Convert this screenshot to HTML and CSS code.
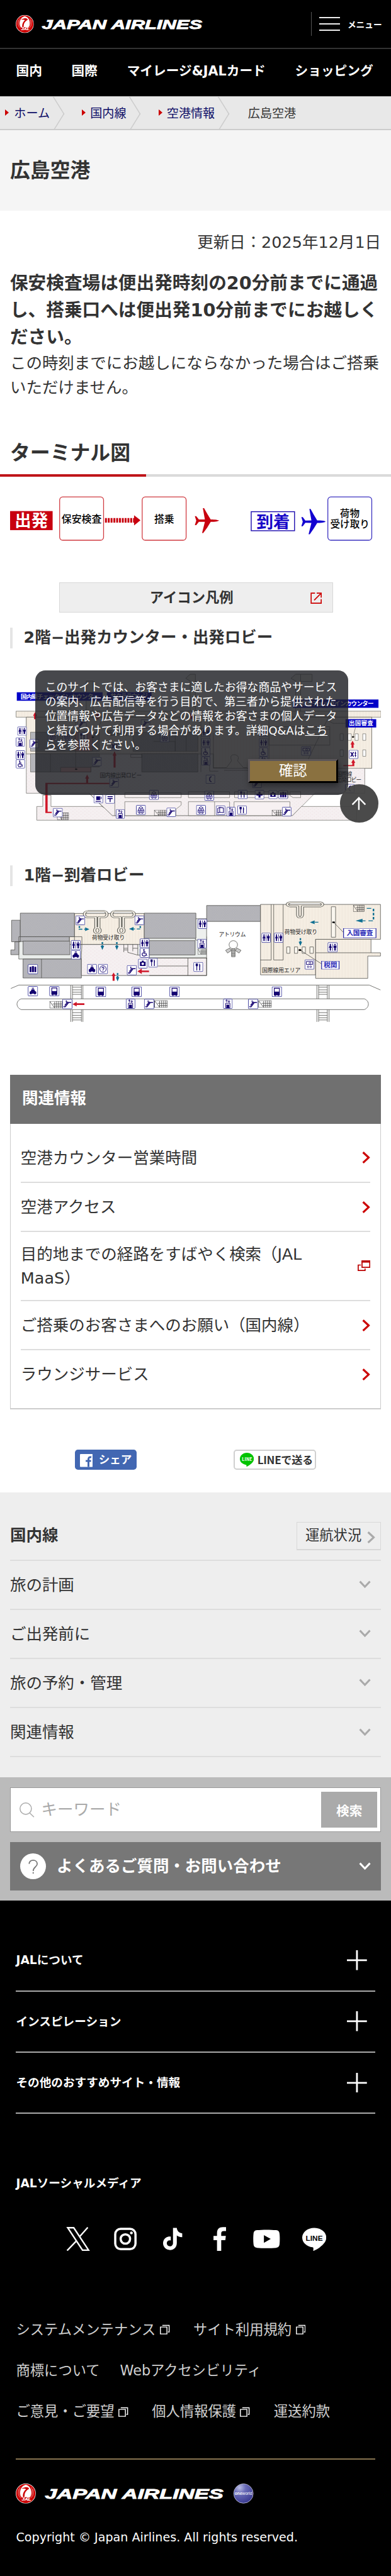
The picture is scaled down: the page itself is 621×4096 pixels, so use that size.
FILE: index.html
```html
<!DOCTYPE html>
<html lang="ja">
<head>
    <meta charset="UTF-8">
    <meta name="viewport" content="width=device-width, initial-scale=1.0">
    <title>広島空港</title>
    <link rel="stylesheet" href="styles.css">
</head>
<body>
    <!-- shared icons -->
    <svg class="defs" width="0" height="0">
        <defs>
            <symbol id="crane" viewBox="0 0 60 60">
                <circle cx="30" cy="30" r="30" fill="#fff"/>
                <circle cx="30" cy="30" r="28.6" fill="#c00"/>
                <path d="M18 41C10 34 11 8 30 4C49 8 50 34 42 41C39 43 33 43 31 40C25 43 21 43 18 41Z" fill="#fff"/>
                <path d="M17 14C24 14 26 11 31 11C36 10 39 13 40 16C36 18 33 20 29 26C26 31 27 34 26 40L22 42C20 30 24 23 31 17C27 15 22 17 17 14Z" fill="#c00"/>
                <path d="M9 17C5 30 8 38 16 44M13 11C8 27 12 37 18 42M51 17C55 30 52 38 44 44M47 11C52 27 48 37 42 42" stroke="#fff" stroke-width=".9" fill="none"/>
                <text x="18" y="51.5" textLength="28" lengthAdjust="spacingAndGlyphs" class="logo-text" font-size="11">JAL</text>
            </symbol>
            <symbol id="arrow" viewBox="0 0 8 12"><path d="M1 .8L6.6 6L1 11.2" fill="none" stroke="currentColor" stroke-width="2"/></symbol>
            <symbol id="down" viewBox="0 0 12 8"><path d="M1 1L6 6.3L11 1" fill="none" stroke="currentColor" stroke-width="1.9"/></symbol>
            <symbol id="plus" viewBox="0 0 20 20"><path d="M10 0V20M0 10H20" stroke="currentColor" stroke-width="1.8"/></symbol>
            <symbol id="copy" viewBox="0 0 10 10"><path d="M.5 2.6H7V9.5H.5ZM2.4 .9H9.2V7.5H8" fill="none" stroke="#fff" stroke-width=".9"/></symbol>

            <pattern id="hatch" width="9" height="12" patternUnits="userSpaceOnUse"><path d="M0 0H9V12H0Z" fill="#b7b7bb"/><path d="M0 12L9 0" stroke="#a2a2ab" stroke-width="1.5"/></pattern>
            <pattern id="cream" width="12" height="20" patternUnits="userSpaceOnUse"><path d="M0 0H12V20H0Z" fill="#f5eee3"/><path d="M3 0V20" stroke="#ece3d6" stroke-width="2"/></pattern>
            <pattern id="dots" width="16" height="24" patternUnits="userSpaceOnUse"><path d="M0 0H16V24H0Z" fill="#f5f0f1"/><path d="M2 4H6M10 16H14" stroke="#efdfe1" stroke-width="4"/></pattern>

            <!-- map pictograms -->
            <symbol id="m-box" viewBox="0 0 20 20"><rect x=".6" y=".6" width="18.8" height="18.8" rx="1.5" fill="#fff" stroke="#3a3a9a" stroke-width="1.2"/></symbol>
            <symbol id="m-esc" viewBox="0 0 20 20" preserveAspectRatio="none"><use href="#m-box"/><path d="M2.5 15.5H6L12.5 7H17.5M5 13L11 5.5" fill="none" stroke="#120070" stroke-width="1.9"/><path d="M8 3V7" stroke="#120070" stroke-width="1.6"/></symbol>
            <symbol id="m-wc" viewBox="0 0 20 20" preserveAspectRatio="none"><use href="#m-box"/><path d="M10 3V17" stroke="#120070" stroke-width="1"/><path d="M5.5 3.5L8.6 11H6.8V16.5H4.2V11H2.4ZM12 6.5H17.6V11H16.4V16.5H13.4V11H12Z" fill="#120070"/><circle cx="5.5" cy="4.4" r="1.4" fill="#120070"/><circle cx="14.8" cy="4.6" r="1.4" fill="#120070"/></symbol>
            <symbol id="m-elev" viewBox="0 0 20 20" preserveAspectRatio="none"><use href="#m-box"/><path d="M7.5 7V2.5M5.5 4.5L7.5 2L9.5 4.5M12.5 2.5V7M10.5 5L12.5 7.5L14.5 5M5.5 9H14.5V18H5.5Z" fill="none" stroke="#120070" stroke-width="1.2"/><path d="M7 12H13V18H7Z" fill="#120070"/></symbol>
            <symbol id="m-bus" viewBox="0 0 20 20" preserveAspectRatio="none"><use href="#m-box"/><path d="M5 3.5H15V16H5Z" fill="none" stroke="#120070" stroke-width="1.4"/><path d="M4.5 10H15.5V16.5H4.5ZM5.5 16H8V18H5.5ZM12 16H14.5V18H12Z" fill="#120070"/></symbol>
            <symbol id="m-car" viewBox="0 0 20 20" preserveAspectRatio="none"><use href="#m-box"/><path d="M3.5 15V11L6 9.5L7.5 6H12.5L14 9.5L16.5 11V15Z" fill="#120070"/><path d="M8 4H12" stroke="#120070" stroke-width="1.6"/><circle cx="6" cy="15" r="1.6" fill="#120070"/><circle cx="14" cy="15" r="1.6" fill="#120070"/></symbol>
            <symbol id="m-fork" viewBox="0 0 20 20" preserveAspectRatio="none"><use href="#m-box"/><path d="M5.5 3V7.5H8.5V3M7 3V17" fill="none" stroke="#120070" stroke-width="1.5"/><path d="M12 3C14.5 4 14.5 9 13.8 10V17H12Z" fill="#120070"/></symbol>
            <symbol id="m-wheel" viewBox="0 0 20 20" preserveAspectRatio="none"><use href="#m-box"/><circle cx="8.5" cy="4" r="1.5" fill="#120070"/><path d="M8.5 5.5V11H13L14.5 16M8.5 8H12M7 9.5C3.5 11 4.5 16.5 8.5 16.5C10.5 16.5 12 15 12 13.5" fill="none" stroke="#120070" stroke-width="1.5"/></symbol>
            <symbol id="m-shop" viewBox="0 0 20 20" preserveAspectRatio="none"><use href="#m-box"/><path d="M6 5.5L10 3L14 5.5V9L16 10V15L13 17L10 15.5L7 17L4 15V10L6 9ZM6 5.5L10 7.5L14 5.5M10 7.5V15M4 10L7 11.5V17M16 10L13 11.5V17M7 11.5L10 10L13 11.5" fill="#d9d9ee" stroke="#120070" stroke-width="1"/></symbol>
            <symbol id="m-tel" viewBox="0 0 20 20" preserveAspectRatio="none"><use href="#m-box"/><path d="M12.5 4.5C7 5 7 15 12.5 15.5" fill="none" stroke="#120070" stroke-width="2.2"/></symbol>
            <symbol id="m-post" viewBox="0 0 20 20" preserveAspectRatio="none"><use href="#m-box"/><path d="M4.5 5H15.5M4.5 9H15.5M10 9V16.5" fill="none" stroke="#120070" stroke-width="2"/></symbol>
            <symbol id="m-cup" viewBox="0 0 20 20" preserveAspectRatio="none"><use href="#m-box"/><path d="M5.5 4.5H13.5V12.5H5.5ZM4 14.5H15.5V16.5H4Z" fill="#120070"/><path d="M13.5 6H16V10H13.5" fill="none" stroke="#120070" stroke-width="1.2"/></symbol>
            <symbol id="m-aid" viewBox="0 0 20 20" preserveAspectRatio="none"><use href="#m-box"/><path d="M10 3.5V16.5M3.5 10H16.5" stroke="#120070" stroke-width="4.2"/></symbol>
            <symbol id="m-cam" viewBox="0 0 20 20" preserveAspectRatio="none"><use href="#m-box"/><path d="M4 6H8V4H12V6H16V15H4Z" fill="#120070"/><circle cx="10" cy="10.5" r="2.6" fill="#fff"/></symbol>
            <symbol id="m-lock" viewBox="0 0 20 20" preserveAspectRatio="none"><use href="#m-box"/><path d="M3.5 5H7V16H3.5ZM8 4H12V16H8ZM13 5H16.5V16H13Z" fill="#120070"/></symbol>
            <symbol id="m-book" viewBox="0 0 20 20" preserveAspectRatio="none"><use href="#m-box"/><path d="M4 6L8 4V14L4 16ZM8 4L16 5V15L8 14" fill="none" stroke="#120070" stroke-width="1.4"/></symbol>
            <symbol id="m-info" viewBox="0 0 20 20" preserveAspectRatio="none"><use href="#m-box"/><circle cx="10" cy="10" r="6.5" fill="none" stroke="#120070" stroke-width="1.2"/><path d="M8 8.5C8 5.5 12.3 6 12 8.5C11.8 10 10 10 10 12M10 13V14.5" fill="none" stroke="#120070" stroke-width="1.4"/></symbol>
            <symbol id="m-chk" viewBox="0 0 20 20" preserveAspectRatio="none"><use href="#m-box"/><path d="M4 5L10 15M10 5L4 15" stroke="#120070" stroke-width="2.2"/><path d="M14 4V16M12 7H16M12 12H16" stroke="#120070" stroke-width="1.4"/></symbol>
            <symbol id="m-atm" viewBox="0 0 20 20" preserveAspectRatio="none"><use href="#m-box"/><path d="M3.5 4H16.5V10H3.5Z" fill="none" stroke="#120070" stroke-width="1.2"/><circle cx="11" cy="7.5" r="2" fill="none" stroke="#120070"/><circle cx="7" cy="14.5" r="1.6" fill="none" stroke="#120070"/><circle cx="12.5" cy="14.5" r="1.6" fill="none" stroke="#120070"/></symbol>
            <symbol id="m-stair" viewBox="0 0 20 20" preserveAspectRatio="none"><path d="M.5 .5H19.5V19.5H.5ZM.5 1L8 19M5 8H19.5M7 14H19.5M8 2V19.5M11 .5V19.5M14 .5V19.5M17 .5V19.5" fill="none" stroke="#333" stroke-width=".9"/></symbol>
        </defs>
    </svg>

    <header class="header">
        <div class="header-top">
            <svg class="logo" viewBox="16 14.5 190 19">
                <use href="#crane" x="16" y="15" width="18" height="18"/>
                <text class="logo-text" x="42" y="28.8" font-size="12.8" textLength="160" lengthAdjust="spacingAndGlyphs">JAPAN AIRLINES</text>
            </svg>
            <button class="menu-btn" type="button">
                <span class="bars"><i></i><i></i><i></i></span>
                メニュー
            </button>
        </div>
        <nav class="gnav">
            <a>国内</a><a>国際</a><a>マイレージ&amp;JALカード</a><a>ショッピング</a>
        </nav>
    </header>

    <main>
        <ol class="crumbs">
            <li><a>ホーム</a></li>
            <li><a>国内線</a></li>
            <li><a>空港情報</a></li>
            <li class="current">広島空港</li>
        </ol>
        <div class="title"><h1>広島空港</h1></div>

        <div class="content">
            <p class="date">更新日：2025年12月1日</p>
            <p class="lead">保安検査場は便出発時刻の20分前までに通過<br>し、搭乗口へは便出発10分前までにお越しく<br>ださい。</p>
            <p class="text">この時刻までにお越しにならなかった場合はご搭乗<br>いただけません。</p>
        </div>

        <h2>ターミナル図</h2>

        <div class="content">
            <svg class="flow" viewBox="10 490 370 60">
                <rect x="10" y="510.5" width="42.4" height="19" fill="#c8000f"/>
                <text x="31.2" y="526" font-size="16.6" font-weight="bold" fill="#fff">出発</text>
                <g fill="#fff" stroke="#d0393f" stroke-width=".8">
                    <rect x="59.4" y="496.4" width="43.8" height="43.2" rx="3"/>
                    <rect x="141.7" y="496.4" width="43.8" height="43.2" rx="3"/>
                    <rect x="326.8" y="496.4" width="43.8" height="43.2" rx="3" stroke="#3a30c0"/>
                </g>
                <text x="81.3" y="521.8" font-size="10" font-weight="500">保安検査</text>
                <text x="163.7" y="521.8" font-size="10" font-weight="500">搭乗</text>
                <path d="M104.6 519.7H134" stroke="#c8000f" stroke-width="4.6" stroke-dasharray="1.9 .9"/>
                <path d="M133.6 514.6L140 519.7L133.6 524.9Z" fill="#c8000f"/>
                <path fill="#c8000f" d="M218.4 520C217 518.9 212 518.8 210 518.8L206.5 513L203.4 507.6H202.2L204.2 518.8L198.2 518.9L195.6 515.6H194.2L195.6 520L194.2 524.6H195.6L198.2 521.2L204.2 521.3L201.4 532.4H202.6L206.5 527L210 521.3C212 521.3 217 521.1 218.4 520Z"/>
                <rect x="250.4" y="511.1" width="43.2" height="19" fill="#fff" stroke="#2010b0" stroke-width=".9"/>
                <text x="272.4" y="526.8" font-size="16.6" font-weight="bold" fill="#1808c8">到着</text>
                <path fill="#1200d0" d="M324.6 521C323.2 519.9 318.2 519.8 316.2 519.8L312.7 514L309.6 508.4H308.4L310.4 519.8L304.4 519.9L301.8 516.6H300.4L301.8 521L300.4 525.6H301.8L304.4 522.2L310.4 522.3L307.6 533.6H308.8L312.7 528L316.2 522.3C318.2 522.3 323.2 522.1 324.6 521Z"/>
                <text x="348.6" y="516.6" font-size="9.8" font-weight="500">荷物</text>
                <text x="348.8" y="527" font-size="9.8" font-weight="500">受け取り</text>
            </svg>

            <a class="legend-btn">
                アイコン凡例
                <svg viewBox="0 0 11 11"><path d="M4.4 .7H.7V10.3H10.3V6.4M6 .7H10.3V5M3.6 7.4L10 1" fill="none" stroke="#c00" stroke-width="1"/></svg>
            </a>

            <h3>2階−出発カウンター・出発ロビー</h3>
            <div class="map-wrap">
                <svg class="map map-2f" viewBox="40 290 1488 1090" preserveAspectRatio="none">
                    <g stroke="#55554f" stroke-width="2">
                        <path d="M345 566V345H373V566M744 325L762 295H783V566H762V345ZM1166 325L1185 295H1205V566H1185V345ZM1205 295H1251V348H1205" fill="#f3f0e8"/>
                        <path d="M64 566H1527V610H64Z" fill="url(#cream)"/>
                        <path d="M105 610H1490V985H1462V1168H1262L1172 1333H450L357 1168H105Z" fill="url(#dots)"/>
                        <path d="M147 1265H171V1182H204V1265H412L450 1333H1172L1208 1265H1430V1366H147Z" fill="url(#dots)"/>
                        <path d="M105 610H1490V985H855V880H105Z" fill="url(#cream)"/>
                        <path d="M122 720H398V860H122ZM533 720H793V860H533ZM122 878H398V975H364V1012H122ZM568 878H793V1012H568Z" fill="url(#hatch)"/>
                        <path d="M243 978H364V1012H243Z" fill="#e8b0b0"/>
                        <path d="M300 720H370V860H300Z" fill="#e8a0a0"/>
                        <path d="M202 878V1012M615 788H702V860M702 720V860M746 720V860M805 610V1012M840 610V1006H875M855 725V980H908L928 930C920 890 930 885 940 885C956 890 958 905 952 930L975 980H990M1078 680H1322V815H1078ZM1078 700H1322M1078 610V1000H898M1320 640L1335 655H1385M524 882H568V905H524Z" fill="none"/>
                        <path d="M500 1165H726V1200H500ZM755 1157H920V1200H755ZM940 1157H1155V1200H940ZM1162 1157H1205V1200H1175L1162 1185ZM500 1230H726V1255L705 1285V1332H500ZM755 1230H920V1332H755ZM938 1230H1162V1332H938ZM860 1230V1332M460 1168V1333M357 1168L415 1275" fill="#f7f1f2"/>
                        <path d="M1363 732H1376V780H1363ZM1394 732H1408V780H1394ZM1423 732H1436V780H1423ZM1454 732H1466V780H1454ZM1363 850H1376V897H1363ZM1454 850H1466V897H1454ZM1425 685L1415 755M1335 540L1235 920M435 530L375 755M303 590V992" fill="#fff"/>
                    </g>
                    <circle cx="1415" cy="755" r="5"/><circle cx="372" cy="757" r="5"/><circle cx="305" cy="992" r="5"/>
                    <g fill="none" stroke="#d0182a" stroke-width="8">
                        <path d="M207 1308H186V1096H438" stroke-width="9"/>
                        <path d="M349 1095V1055M459 980V885M1376 965H1416V945M1413 836V805M140 624V595M391 624V595M768 624V595"/>
                    </g>
                    <path fill="#d0182a" d="M341 1060L349 1030L357 1060ZM451 892L459 860L467 892ZM1408 945L1416 917L1424 945ZM1405 810L1413 783L1421 810ZM132 600L140 572L148 600ZM383 600L391 572L399 600ZM760 600L768 572L776 600Z"/>
                    <g fill="#0000c8"><path d="M67 427H411V490H67ZM428 427H607V487H428ZM1174 480H1517V542H1174ZM1385 624H1508V686H1385Z"/></g>
                    <g class="map-label">
                        <text x="239" y="473" textLength="314">国内線チェックインカウンター</text>
                        <text x="517" y="471" textLength="150">サクララウンジ</text>
                        <text x="1341" y="525" textLength="314">国際線チェックインカウンター</text>
                        <text x="1447" y="668" textLength="98">出国審査</text>
                    </g>
                    <g class="map-text">
                        <text x="484" y="1050" textLength="168">国内線出発ロビー</text>
                        <text x="480" y="743" textLength="104">搭乗待合室</text>
                        <text x="1380" y="1040" textLength="62">国際線</text>
                        <text x="1399" y="1085" textLength="100">出発ロビー</text>
                    </g>
                    <g>
                        <use href="#m-wc" x="69" y="679" width="38" height="66"/><use href="#m-elev" x="63" y="758" width="36" height="68"/><use href="#m-esc" x="118" y="771" width="38" height="66"/><use href="#m-wc" x="63" y="853" width="37" height="68"/><use href="#m-wheel" x="63" y="919" width="37" height="67"/>
                        <use href="#m-cup" x="375" y="1176" width="38" height="66"/><use href="#m-post" x="422" y="1176" width="38" height="68"/><use href="#m-shop" x="597" y="1144" width="39" height="72"/><use href="#m-shop" x="819" y="1150" width="39" height="72"/><use href="#m-fork" x="953" y="1144" width="39" height="66"/><use href="#m-aid" x="1021" y="1144" width="38" height="68"/><use href="#m-cam" x="1076" y="1146" width="36" height="64"/><use href="#m-lock" x="1116" y="1146" width="38" height="64"/>
                        <use href="#m-shop" x="545" y="1254" width="39" height="73"/><use href="#m-stair" x="617" y="1290" width="50" height="44"/><use href="#m-esc" x="667" y="1274" width="38" height="68"/><use href="#m-shop" x="786" y="1254" width="39" height="73"/><use href="#m-book" x="865" y="1258" width="38" height="70"/><use href="#m-elev" x="908" y="1268" width="36" height="70"/><use href="#m-fork" x="951" y="1258" width="38" height="66"/><use href="#m-stair" x="1089" y="1290" width="50" height="44"/><use href="#m-esc" x="1130" y="1268" width="38" height="70"/>
                        <use href="#m-stair" x="228" y="1310" width="48" height="54"/><use href="#m-esc" x="212" y="1276" width="39" height="68"/><use href="#m-elev" x="464" y="1285" width="36" height="70"/><use href="#m-tel" x="1383" y="1100" width="38" height="66"/><use href="#m-chk" x="1398" y="850" width="38" height="66"/>
                        <use href="#m-esc" x="309" y="626" width="38" height="66"/><use href="#m-esc" x="564" y="626" width="38" height="66"/><use href="#m-shop" x="192" y="718" width="38" height="66"/><use href="#m-shop" x="250" y="718" width="38" height="66"/><use href="#m-fork" x="312" y="718" width="38" height="66"/><use href="#m-shop" x="641" y="724" width="38" height="70"/><use href="#m-wc" x="807" y="690" width="36" height="66"/><use href="#m-wc" x="807" y="764" width="36" height="66"/><use href="#m-wheel" x="807" y="832" width="36" height="66"/><use href="#m-elev" x="807" y="898" width="36" height="66"/><use href="#m-wc" x="1038" y="690" width="36" height="66"/><use href="#m-wc" x="1038" y="764" width="36" height="66"/><use href="#m-wheel" x="1038" y="832" width="36" height="66"/><use href="#m-elev" x="1038" y="898" width="36" height="66"/><use href="#m-atm" x="1207" y="824" width="40" height="68"/><use href="#m-esc" x="369" y="902" width="38" height="68"/><use href="#m-esc" x="438" y="1058" width="38" height="68"/><use href="#m-tel" x="824" y="1032" width="38" height="66"/><use href="#m-esc" x="1011" y="1062" width="38" height="68"/><use href="#m-chk" x="440" y="790" width="38" height="66"/>
                    </g>
                </svg>

                <div class="consent">
                    <p>このサイトでは、お客さまに適したお得な商品やサービス<br>の案内、広告配信等を行う目的で、第三者から提供された<br>位置情報や広告データなどの情報をお客さまの個人データ<br>と結びつけて利用する場合があります。詳細Q&amp;Aは<a>こち<br>ら</a>を参照ください。</p>
                    <button type="button">確認</button>
                </div>
                <a class="to-top"><svg viewBox="0 0 15 13"><path d="M7.5 13V.8M1 7.8L7.5 1L14 7.8" fill="none" stroke="#fff" stroke-width="1.5"/></svg></a>
            </div>

            <h3>1階−到着ロビー</h3>
            <svg class="map map-1f" viewBox="40 390 1488 900" preserveAspectRatio="none">
                <g stroke="#4c4c48" stroke-width="2.5">
                    <path d="M75 655H828V819H75Z" fill="#e9ecea"/>
                    <path d="M783 523H828V680H783Z" fill="#eef0ee"/>
                    <path d="M46 534H81V692H46ZM59 692H75V787H43V752H59ZM75 655H278V690H75Z" fill="url(#hatch)"/>
                    <path d="M298 484H578V712H298ZM278 655H328V712H278Z" fill="url(#cream)"/>
                    <path d="M81 482H298V655H81ZM578 482H785V667H578ZM92 687H280V787H92ZM598 684H782V789H598ZM92 819H326V958H92ZM828 426H1044V543H828Z" fill="url(#hatch)"/>
                    <path d="M166 819V958" />
                    <path d="M328 712H552V790H598V811H828V940H326V790Z" fill="url(#dots)"/>
                    <path d="M598 811H828V940H598M632 870H753M753 811V940M496 712V768M512 712V770L552 790M496 740H512M532 740H552M532 712V762M496 752H512" fill="none"/>
                    <path d="M1044 418H1525V674H1265V935H1044Z" fill="url(#cream)"/>
                    <path d="M1265 674H1487V773H1525V797H1474V961H1265ZM1265 773H1487" fill="url(#cream)"/>
                    <path d="M1087 418V826M1097 418V826M1135 418V826M1044 826H1087M1097 826H1135" fill="none"/>
                    <path d="M1328 435H1345V659H1328ZM1149 730H1162V777H1149ZM1180 730H1193V777H1180ZM1211 730H1224V777H1211ZM1242 730H1256V777H1242Z" fill="#faf6ee"/>
                    <path d="M1202 752L1298 865M1337 549L1380 630" fill="none"/>
                    <path d="M43 1035L75 1010H1480L1525 1046M85 1111H1460C1482 1125 1482 1175 1460 1190H85C62 1175 62 1125 85 1111Z" fill="none"/>
                    <path d="M283 1012V1111M290 1012V1111M326 1012V1111M332 1012V1111M290 1025H326M290 1045H326M290 1062H326M290 1078H326M283 1190V1280M290 1190V1280M326 1190V1280M332 1190V1280M290 1212H326M290 1232H326M290 1250H326M290 1266H326M1270 1012V1111M1277 1012V1111M1312 1012V1111M1319 1012V1111M1277 1025H1312M1277 1045H1312M1277 1062H1312M1277 1078H1312M1270 1190V1280M1277 1190V1280M1312 1190V1280M1319 1190V1280M1277 1212H1312M1277 1232H1312M1277 1250H1312M1277 1266H1312" fill="none"/>
                    <ellipse cx="935" cy="714" rx="17" ry="30" fill="#fff"/>
                    <path d="M928 745H942V802H928ZM921 738L904 755L912 775L926 758ZM949 738L966 755L958 775L944 758ZM928 756H942M928 768H942M928 780H942M928 791H942" fill="#ccc"/>
                </g>
                <!-- baggage belts -->
                <g fill="none" stroke="#55554f" stroke-width="12" stroke-linejoin="round">
                    <path d="M350 468H418C432 475 432 506 418 512H396V588M384 588V512H350C334 506 334 475 350 468M458 468H526C542 475 542 506 526 512H494V588M482 588V512H458C444 506 444 475 458 468"/>
                    <path d="M1162 403H1284C1296 410 1296 425 1284 432H1212V495C1210 520 1194 520 1193 495V432H1162C1148 425 1148 410 1162 403Z"/>
                    <ellipse cx="390" cy="609" rx="11" ry="21"/><ellipse cx="486" cy="609" rx="11" ry="21"/>
                </g>
                <g fill="none" stroke="#f2ede4" stroke-width="7" stroke-linejoin="round">
                    <path d="M350 468H418C432 475 432 506 418 512H396V588M384 588V512H350C334 506 334 475 350 468M458 468H526C542 475 542 506 526 512H494V588M482 588V512H458C444 506 444 475 458 468"/>
                    <path d="M1162 403H1284C1296 410 1296 425 1284 432H1212V495C1210 520 1194 520 1193 495V432H1162C1148 425 1148 410 1162 403Z"/>
                    <ellipse cx="390" cy="609" rx="11" ry="21"/><ellipse cx="486" cy="609" rx="11" ry="21"/>
                </g>
                <circle cx="1337" cy="549" r="6"/><circle cx="1202" cy="753" r="6"/>
                <g fill="none" stroke="#0f6f92" stroke-width="6">
                    <path d="M318 577V600H342M562 577V598H534M410 695V725M468 695V725M471 922V955M1204 666V695M1276 549H1258" stroke-dasharray="14 7"/>
                    <path d="M1470 447H1497V538H1452" stroke-dasharray="18 12"/>
                </g>
                <path fill="#0f6f92" d="M341 586L358 600L341 614ZM535 584L517 598L535 612ZM403 722H417L410 752ZM461 722H475L468 752ZM464 952H478L471 983ZM1197 692H1211L1204 722ZM1261 535L1242 549L1261 563ZM1453 524L1425 538L1453 552Z"/>
                <path fill="#d0182a" d="M551 909L568 889V903H597V915H568V929ZM455 918L463 943H459V979H451V943H447ZM290 1150L307 1133V1144H338V1156H307V1167Z"/>
                <g fill="#fff" stroke="#2020a0" stroke-width="3"><path d="M1377 594H1507V663H1377ZM1289 834H1359V893H1289Z"/></g>
                <g class="map-label blue"><text x="1442" y="646" textLength="106">入国審査</text><text x="1324" y="881" textLength="54">税関</text></g>
                <g class="map-text">
                    <text x="434" y="678" textLength="132">荷物受け取り</text>
                    <text x="931" y="652" textLength="108">アトリウム</text>
                    <text x="1206" y="634" textLength="132">荷物受け取り</text>
                    <text x="1127" y="918" textLength="154">国際線用エリア</text>
                </g>
                <g>
                    <use href="#m-esc" x="302" y="500" width="39" height="70"/><use href="#m-esc" x="539" y="500" width="39" height="70"/><use href="#m-wc" x="284" y="680" width="39" height="73"/><use href="#m-car" x="284" y="753" width="39" height="69"/><use href="#m-wc" x="560" y="668" width="39" height="70"/><use href="#m-wheel" x="560" y="738" width="39" height="72"/><use href="#m-fork" x="594" y="811" width="38" height="70"/><use href="#m-cam" x="553" y="817" width="38" height="71"/><use href="#m-esc" x="508" y="864" width="40" height="74"/><use href="#m-car" x="349" y="855" width="39" height="74"/><use href="#m-info" x="393" y="855" width="39" height="74"/><use href="#m-lock" x="111" y="857" width="41" height="73"/><use href="#m-fork" x="775" y="841" width="39" height="72"/>
                    <use href="#m-wc" x="792" y="525" width="38" height="73"/><use href="#m-elev" x="791" y="671" width="37" height="70"/><use href="#m-stair" x="792" y="743" width="36" height="44"/><use href="#m-wc" x="1048" y="626" width="37" height="74"/><use href="#m-wc" x="1098" y="626" width="37" height="74"/><use href="#m-wc" x="1313" y="696" width="40" height="74"/><use href="#m-atm" x="1221" y="822" width="39" height="74"/><use href="#m-stair" x="1415" y="422" width="46" height="50"/>
                    <use href="#m-car" x="111" y="1018" width="41" height="74"/><use href="#m-bus" x="197" y="1018" width="41" height="74"/><use href="#m-bus" x="383" y="1020" width="42" height="77"/><use href="#m-bus" x="527" y="1020" width="41" height="77"/><use href="#m-bus" x="679" y="1020" width="41" height="77"/><use href="#m-bus" x="1089" y="1020" width="41" height="77"/>
                    <use href="#m-stair" x="198" y="1127" width="52" height="54"/><use href="#m-esc" x="249" y="1112" width="41" height="74"/><use href="#m-elev" x="504" y="1110" width="38" height="74"/><use href="#m-esc" x="577" y="1111" width="41" height="75"/><use href="#m-stair" x="618" y="1122" width="54" height="54"/><use href="#m-elev" x="894" y="1110" width="38" height="74"/><use href="#m-esc" x="994" y="1111" width="41" height="75"/><use href="#m-stair" x="1035" y="1122" width="54" height="54"/>
                </g>
            </svg>

            <section class="related">
                <h4>関連情報</h4>
                <ul>
                    <li>空港カウンター営業時間<svg class="arrow"><use href="#arrow"/></svg></li>
                    <li>空港アクセス<svg class="arrow"><use href="#arrow"/></svg></li>
                    <li>目的地までの経路をすばやく検索（JAL<br>MaaS）<svg class="ext" viewBox="0 0 13 11"><path d="M4.5 .6H12.4V7H4.5ZM3.4 4.7H.6V10.3H7.6V8.2" fill="none" stroke="#b00" stroke-width="1.1"/><path d="M4 0H13V2.2H4Z" fill="#b00"/></svg></li>
                    <li>ご搭乗のお客さまへのお願い（国内線）<svg class="arrow"><use href="#arrow"/></svg></li>
                    <li>ラウンジサービス<svg class="arrow"><use href="#arrow"/></svg></li>
                </ul>
            </section>
        </div>

        <div class="share">
            <a class="fb"><svg viewBox="0 0 13 13"><rect width="13" height="13" rx=".8" fill="#fff"/><path d="M11.5 3.2C9 2.8 8.6 4 8.6 5.5V13M5.8 7H11.2" fill="none" stroke="#4267b2" stroke-width="1.9"/></svg>シェア</a>
            <a class="line"><svg viewBox="0 0 14 14"><path d="M7 0C3 0 0 2.8 0 6.2C0 9.3 2.5 11.5 6.5 12.2L6.6 14C10 12.5 14 9.5 14 6.2C14 2.8 11 0 7 0Z" fill="#00c300"/><text x="7" y="8" font-size="4.4" textLength="10">LINE</text></svg>LINEで送る</a>
        </div>
    </main>

    <section class="local">
        <div class="local-head"><strong>国内線</strong><a>運航状況<svg><use href="#arrow"/></svg></a></div>
        <ul>
            <li>旅の計画<svg><use href="#down"/></svg></li>
            <li>ご出発前に<svg><use href="#down"/></svg></li>
            <li>旅の予約・管理<svg><use href="#down"/></svg></li>
            <li>関連情報<svg><use href="#down"/></svg></li>
        </ul>
    </section>

    <section class="search">
        <div class="search-box">
            <svg viewBox="0 0 15 15"><circle cx="6.2" cy="6.2" r="5.7"/><path d="M10 10.4L14.4 14.6"/></svg>
            <span>キーワード</span>
            <button type="button">検索</button>
        </div>
        <div class="faq">
            <span class="q"><svg viewBox="0 0 26 26"><path d="M9 10.5C9 5.5 17 5.7 17 10.5C17 13.5 13 13.6 13 17.5M13 18.6V20.2" fill="none" stroke="#777" stroke-width="1.1"/></svg></span>
            よくあるご質問・お問い合わせ
            <svg class="down"><use href="#down"/></svg>
        </div>
    </section>

    <footer class="footer">
        <ul class="acc">
            <li>JALについて<svg><use href="#plus"/></svg></li>
            <li>インスピレーション<svg><use href="#plus"/></svg></li>
            <li>その他のおすすめサイト・情報<svg><use href="#plus"/></svg></li>
        </ul>
        <p class="sns-title">JALソーシャルメディア</p>
        <div class="sns">
            <svg viewBox="0 0 24 24"><path d="M1.6 .8H7.6L22.4 23.2H16.4ZM21.6 .5L13.3 9.9M10.6 13.6L1 23.6" fill="none" stroke="#fff" stroke-width="1.5"/></svg>
            <svg viewBox="0 0 24 24"><rect x="1.9" y="1.9" width="20.2" height="20.2" rx="5.4" fill="none" stroke="#fff" stroke-width="2.2"/><circle cx="12" cy="12" r="4.7" fill="none" stroke="#fff" stroke-width="2.2"/><circle cx="18" cy="6" r="1.4" fill="#fff"/></svg>
            <svg viewBox="0 0 24 24"><path d="M12.4 1H16.2C16.4 4 18.6 6.2 21.6 6.4V10.2C19.6 10.2 17.6 9.5 16.2 8.4V16C16.2 20.5 13 23 9.5 23C5.5 23 2.5 20 2.5 16.2C2.5 12 6 9 10.2 9.6V13.5C8 12.9 6.2 14.2 6.2 16.2C6.2 18 7.6 19.3 9.4 19.3C11.2 19.3 12.4 18 12.4 16Z" fill="#fff"/></svg>
            <svg viewBox="0 0 24 24"><path d="M9.2 24V13.2H5.7V9H9.2V6.2C9.2 2 11.5 .2 15 .2H18.2V4.1H16C14 4.1 13.4 4.9 13.4 6.6V9H18L17.5 13.2H13.4V24Z" fill="#fff"/></svg>
            <svg viewBox="0 0 28 24"><path d="M4.5 3.2C10 2.6 18 2.6 23.5 3.2C25.8 3.5 26.8 4.6 27 7C27.3 10 27.3 14 27 17C26.8 19.4 25.8 20.5 23.5 20.8C18 21.4 10 21.4 4.5 20.8C2.2 20.5 1.2 19.4 1 17C.7 14 .7 10 1 7C1.2 4.6 2.2 3.5 4.5 3.2ZM11.4 8.2V15.8L18.2 12Z" fill="#fff" fill-rule="evenodd"/></svg>
            <svg viewBox="0 0 24 24"><path d="M12 1C5.3 1 0 5.3 0 10.7C0 15.5 4.4 19.6 10.3 20.3C11.6 20.6 11 22 11 24C15 22.4 24 17 24 10.7C24 5.3 18.7 1 12 1Z" fill="#fff"/><text x="12" y="13.6" font-size="7.4" textLength="17" lengthAdjust="spacingAndGlyphs">LINE</text></svg>
        </div>
        <div class="links">
            <div><a class="ex">システムメンテナンス<svg><use href="#copy"/></svg></a><a class="ex">サイト利用規約<svg><use href="#copy"/></svg></a></div>
            <div><a>商標について</a><a>Webアクセシビリティ</a></div>
            <div><a class="ex">ご意見・ご要望<svg><use href="#copy"/></svg></a><a class="ex">個人情報保護<svg><use href="#copy"/></svg></a><a>運送約款</a></div>
        </div>
        <svg class="foot-logo" viewBox="16 2478.5 240 21" preserveAspectRatio="xMinYMin meet">
            <defs><radialGradient id="ow" cx=".3" cy=".2" r=".9"><stop offset="0" stop-color="#b9bce4"/><stop offset=".35" stop-color="#6a6cb8"/><stop offset="1" stop-color="#34348c"/></radialGradient></defs>
            <use href="#crane" x="16" y="2479" width="20" height="20"/>
            <text class="logo-text" x="45" y="2494" font-size="14.2" textLength="178" lengthAdjust="spacingAndGlyphs">JAPAN AIRLINES</text>
            <circle cx="243" cy="2489" r="9.7" fill="url(#ow)" stroke="#c9c9e0" stroke-width=".5"/>
            <text class="ow" x="234.3" y="2490.4" font-size="4.1" textLength="17.4" lengthAdjust="spacingAndGlyphs"><tspan font-weight="bold">one</tspan>world</text>
        </svg>
        <p class="copy">Copyright © Japan Airlines. All rights reserved.</p>
    </footer>
</body>
</html>
```
FILE: styles.css
```css
html{
    font-size: 15.932px;
    background: #000;
}
*{
    box-sizing: border-box;
}
body{
    margin: 0;
    font-family: "DejaVu Sans", "Noto Sans CJK JP", sans-serif;
    font-size: 1.6rem;
    line-height: 2.4rem;
    color: #333;
    overflow-x: hidden;
}
h1, h2, h3, h4, p, ul, ol{
    margin: 0;
    padding: 0;
    list-style: none;
}
button{
    font-family: inherit;
    border: 0;
    padding: 0;
}
svg{
    display: block;
}
.defs{
    position: absolute;
}
.logo-text{
    font-family: "Liberation Sans", sans-serif;
    font-weight: bold;
    font-style: italic;
    fill: #fff;
    stroke: #fff;
    stroke-width: .5px;
}

/* header */
.header{
    background: #000;
    color: #fff;
}
.header-top{
    height: 4.8rem;
    padding: 0 .9rem 0 1.6rem;
    display: flex;
    justify-content: space-between;
    align-items: center;
}
.logo{
    width: 19rem;
    height: 1.9rem;
}
.menu-btn{
    display: flex;
    align-items: center;
    gap: .75rem;
    height: 2.4rem;
    padding-left: .8rem;
    border-left: 1px solid #555;
    background: none;
    color: #fff;
    font-size: .86rem;
    font-weight: bold;
    white-space: nowrap;
}
.bars{
    display: flex;
    flex-direction: column;
    justify-content: space-between;
    width: 2.05rem;
    height: 1.4rem;
}
.bars i{
    height: 2px;
    background: #eee;
}
.gnav{
    height: 4.8rem;
    border-top: 2px solid #333;
    padding: 0 1.6rem 0 1.6rem;
    display: flex;
    gap: 2.93rem;
    font-size: 1.3rem;
    font-weight: bold;
    line-height: 4.4rem;
    white-space: nowrap;
}

main{
    background: #fff;
}

/* breadcrumb */
.crumbs{
    display: flex;
    height: 3.4rem;
    border-top: 1px solid #ccc;
    border-bottom: 2px solid #ccc;
    background: #e8e8e8;
    font-size: 1.2rem;
    line-height: 3.35rem;
    overflow: hidden;
}
.crumbs li{
    position: relative;
    padding-left: 1.4rem;
    padding-right: 3.2rem;
}
.crumbs li + li{
    padding-left: .83rem;
}
.crumbs .current{
    padding-left: .1rem;
}
.crumbs a{
    color: #0c0c66;
}
.crumbs a::before{
    content: "";
    position: absolute;
    left: .5rem;
    top: 1.25rem;
    border-left: .4rem solid #c00;
    border-top: .36rem solid transparent;
    border-bottom: .36rem solid transparent;
}
.crumbs li + li a::before{
    left: 0;
}
.crumbs li:not(.current)::after{
    content: "";
    position: absolute;
    right: 1.6rem;
    top: .35rem;
    width: 2.5rem;
    height: 2.5rem;
    border-top: 2px solid #ccc;
    border-right: 2px solid #ccc;
    transform: scaleX(.62) rotate(45deg);
}

.title{
    height: 8rem;
    padding: 0 1rem;
    background: #f5f5f5;
}
.title h1{
    font-size: 2rem;
    line-height: 8.05rem;
}
.content{
    padding: 0 1rem;
}
.date{
    padding-top: 2rem;
    text-align: right;
}
.lead{
    margin-top: 1.55rem;
    font-size: 1.8rem;
    font-weight: bold;
    line-height: 2.7rem;
    white-space: nowrap;
}
.text{
    white-space: nowrap;
}
h2{
    margin-top: 3.85rem;
    padding: .06rem 1rem .54rem;
    font-size: 2rem;
    line-height: 3rem;
    border-bottom: .3rem solid;
    border-image: linear-gradient(to right, #bf1519 14.6rem, #dadada 14.6rem) 1;
}

.flow{
    width: 37rem;
    height: 6rem;
    margin-top: 1.4rem;
}
.flow text{
    text-anchor: middle;
}
.legend-btn{
    position: relative;
    display: block;
    width: 27.3rem;
    height: 3rem;
    margin: 3.2rem 0 0 4.92rem;
    padding-right: .95rem;
    border: 1px solid #d8d8d8;
    background: #eee;
    text-align: center;
    font-size: 1.4rem;
    font-weight: bold;
    line-height: 2.95rem;
}
.legend-btn svg{
    position: absolute;
    right: 1.05rem;
    top: .9rem;
    width: 1.15rem;
    height: 1.15rem;
}
h3{
    height: 2.1rem;
    margin-top: 1.5rem;
    padding-left: 1.1rem;
    border-left: .3rem solid #e5e5e5;
    font-size: 1.6rem;
    line-height: 1.98rem;
    white-space: nowrap;
}

/* floor maps */
.map-wrap{
    position: relative;
    margin-top: 2.48rem;
}
.map{
    width: 37rem;
}
.map-2f{
    height: 14.83rem;
}
.map-1f{
    height: 12.24rem;
    margin-top: 1.47rem;
}
.map-wrap + h3{
    margin-top: 4.29rem;
}
.map text{
    text-anchor: middle;
    transform-box: fill-box;
    transform-origin: center 80%;
    transform: scaleY(1.83);
}
.map-text text{
    font-size: 22px;
    fill: #222;
}
.map-label text{
    font-size: 24px;
    font-weight: bold;
    fill: #fff;
}
.map-label.blue text{
    font-size: 27px;
    fill: #2a2ab8;
}

.consent{
    position: absolute;
    left: 2.5rem;
    top: -.3rem;
    width: 31.2rem;
    height: 12.4rem;
    padding: .9rem 1rem;
    border-radius: 1rem;
    background: rgba(31, 32, 37, .82);
    color: #fff;
    font-size: 1.12rem;
    line-height: 1.45rem;
    white-space: nowrap;
}
.consent a{
    text-decoration: underline;
}
.consent button{
    display: block;
    width: 9rem;
    height: 2.4rem;
    margin: .7rem 0 0 auto;
    border: 3px solid;
    border-color: #5a5558 #000 #000 #5a5558;
    background: #8a7140;
    color: #fff;
    font-size: 1.4rem;
    line-height: 2rem;
    box-shadow: .1rem .3rem .6rem rgba(0, 0, 0, .4);
}
.to-top{
    position: absolute;
    left: 32.9rem;
    top: 11.05rem;
    width: 3.8rem;
    height: 3.8rem;
    border-radius: 50%;
    background: rgba(64, 64, 64, .95);
    display: flex;
    justify-content: center;
    align-items: center;
}
.to-top svg{
    width: 1.5rem;
    height: 1.3rem;
}

/* related links */
.related{
    margin-top: 5.12rem;
}
.related h4{
    height: 4.9rem;
    padding: 0 1.2rem;
    background: #707070;
    color: #fff;
    font-size: 1.6rem;
    line-height: 4.75rem;
}
.related ul{
    height: 28.5rem;
    padding: 1rem;
    border: 1px solid #ccc;
    border-top: 0;
    border-bottom-width: 2px;
}
.related li{
    display: flex;
    justify-content: space-between;
    align-items: center;
    height: 4.9rem;
    border-bottom: 2px solid #ddd;
}
.related li:nth-child(3){
    height: 6.9rem;
    position: relative;
}
.related li:last-child{
    height: 4.8rem;
    border: 0;
}
.related .arrow{
    width: .8rem;
    height: 1.2rem;
    color: #c00;
}
.related .ext{
    position: absolute;
    right: 0;
    width: 1.27rem;
    height: 1.1rem;
}

.share{
    display: flex;
    height: 8.3rem;
    padding: 4rem 7.5rem 0;
    justify-content: space-between;
}
.share a{
    display: flex;
    align-items: center;
    height: 2rem;
    border-radius: .3rem;
    font-size: 1.1rem;
    font-weight: bold;
    white-space: nowrap;
}
.share .fb{
    width: 6.1rem;
    padding-left: .46rem;
    gap: .6rem;
    background: #4267b2;
    color: #fff;
}
.share .fb svg{
    width: 1.28rem;
    height: 1.28rem;
    margin-top: .2rem;
}
.share .line{
    width: 8.2rem;
    padding-left: .5rem;
    gap: .35rem;
    border: 2px solid #d0d0d0;
    font-family: "Noto Sans CJK JP", sans-serif;
    font-size: 1.08rem;
    font-weight: bold;
    letter-spacing: -.02em;
}
.share .line svg{
    width: 1.4rem;
    height: 1.4rem;
}
.share text{
    text-anchor: middle;
    fill: #fff;
}

/* local navigation */
.local{
    height: 28.4rem;
    padding: 2.9rem 1rem 0;
    background: #eee;
}
.local-head{
    display: flex;
    justify-content: space-between;
    height: 3.9rem;
    border-bottom: 2px solid #ddd;
    line-height: 2.75rem;
}
.local-head a{
    display: flex;
    justify-content: space-between;
    align-items: center;
    width: 8.4rem;
    height: 2.85rem;
    padding: 0 .5rem 0 .8rem;
    border: 1px solid #d8d8d8;
    border-bottom-width: 2px;
    font-size: 1.4rem;
    line-height: 2.5rem;
}
.local-head svg{
    width: .8rem;
    height: 1.2rem;
    margin-top: .3rem;
    color: #aaa;
}
.local li{
    display: flex;
    justify-content: space-between;
    align-items: center;
    height: 4.9rem;
    padding-right: 1rem;
    border-bottom: 2px solid #ddd;
}
.local li svg, .faq .down{
    width: 1.2rem;
    height: .8rem;
    color: #aaa;
}

.search{
    height: 12.3rem;
    padding: 1rem;
    background: #bbb;
}
.search-box{
    display: flex;
    align-items: center;
    height: 4.5rem;
    padding: 0 .3rem 0 .9rem;
    border: 1px solid #999;
    background: #fff;
    color: #aaa;
}
.search-box svg{
    width: 1.5rem;
    height: 1.5rem;
    margin-right: .65rem;
    fill: none;
    stroke: #aaa;
    stroke-width: .9;
}
.search-box button{
    width: 5.6rem;
    height: 3.6rem;
    margin-left: auto;
    background: #aaa;
    color: #fff;
    font-size: 1.3rem;
    font-weight: bold;
}
.faq{
    display: flex;
    align-items: center;
    height: 4.8rem;
    margin-top: 1rem;
    padding: 0 1rem;
    background: #777;
    color: #fff;
    font-weight: bold;
}
.faq .q{
    width: 2.6rem;
    height: 2.6rem;
    margin-right: 1.05rem;
    border-radius: 50%;
    background: #fff;
}
.faq .down{
    margin-left: auto;
    color: #fff;
}

/* footer */
.footer{
    padding: 3rem 1.6rem 0;
    height: 67.4rem;
    background: #000;
    color: #fff;
}
.acc li{
    display: flex;
    justify-content: space-between;
    align-items: center;
    height: 6.1rem;
    padding-right: .8rem;
    border-bottom: 2px solid #aaa;
    font-size: 1.17rem;
    font-weight: bold;
    line-height: 2.1rem;
}
.acc svg{
    width: 2rem;
    height: 2rem;
}
.sns-title{
    margin-top: 5.95rem;
    font-size: 1.17rem;
    font-weight: bold;
    line-height: 2rem;
}
/* first icon lines up at 6.6rem from the page edge */
.sns{
    display: flex;
    gap: 2.3rem;
    margin-top: 3.35rem;
    padding-left: 5rem;
}
.sns svg{
    width: 2.4rem;
    height: 2.4rem;
}
.sns svg:nth-child(5){
    width: 2.8rem;
    margin: 0 -.2rem;
}
.sns text{
    text-anchor: middle;
    font-family: "Liberation Sans", sans-serif;
    font-weight: bold;
}
.links{
    margin-top: 5.8rem;
    color: #d0d0d0;
    font-size: 1.4rem;
    line-height: 4.1rem;
    white-space: nowrap;
}
.links div{
    display: flex;
    gap: 2rem;
}
.links a{
    display: flex;
    align-items: center;
}
.links .ex{
    padding-right: .35rem;
}
.links svg{
    width: 1rem;
    height: 1rem;
    margin-left: .4rem;
}
.foot-logo{
    width: 35.8rem;
    height: 4.58rem;
    padding: 2.33rem 11.8rem 0 0;
    margin-top: 2.6rem;
    border-top: 2px solid #86734f;
}
.ow{
    font-family: "Liberation Sans", sans-serif;
    fill: #fff;
}
.copy{
    margin-top: 2.15rem;
    font-size: 1.2rem;
    line-height: 2.4rem;
}
```
